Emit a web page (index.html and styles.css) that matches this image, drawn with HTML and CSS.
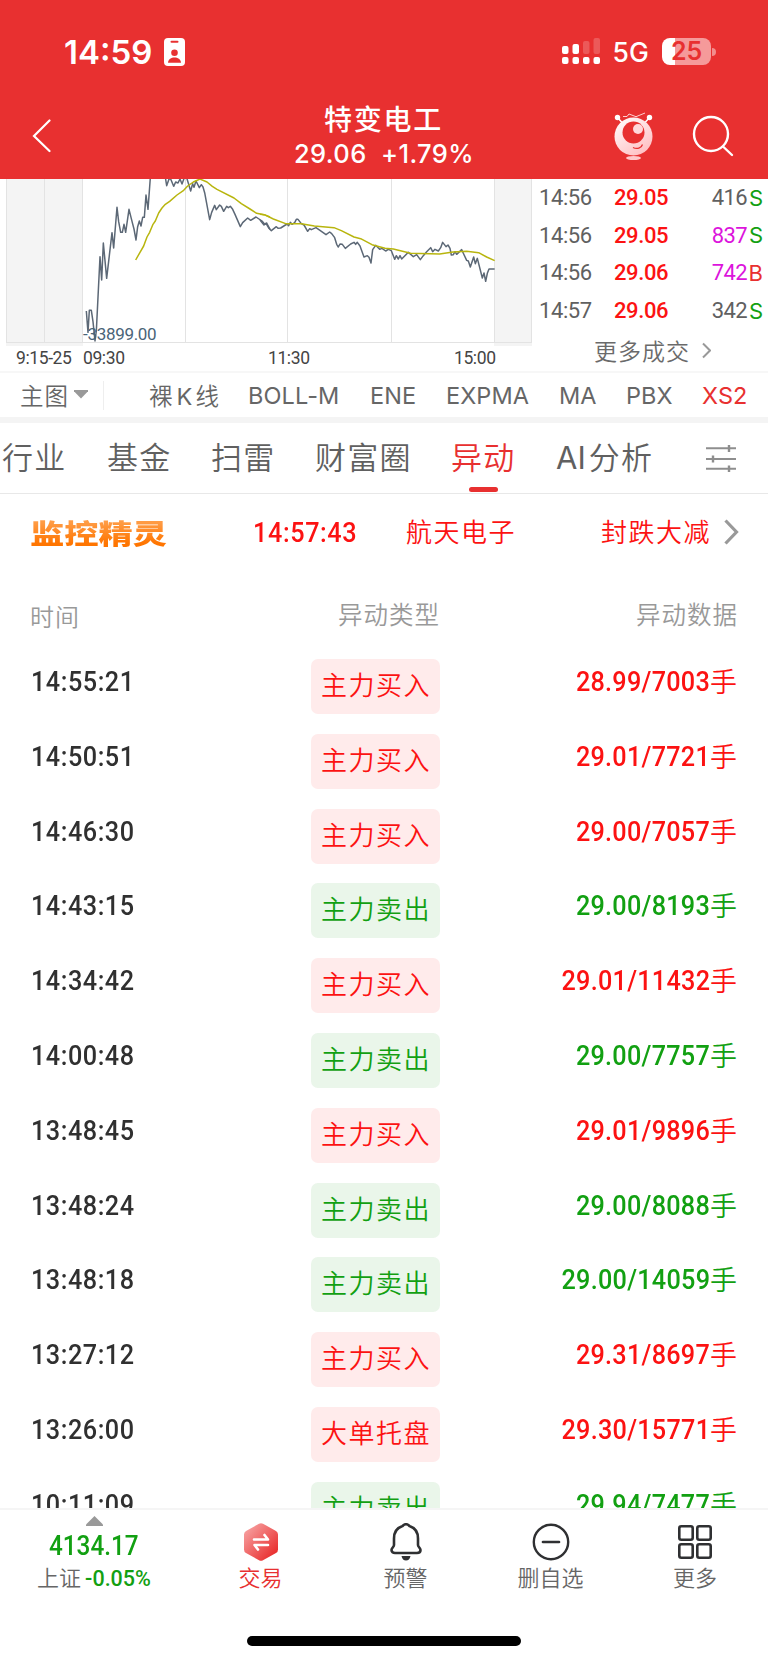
FILE: index.html
```html
<!DOCTYPE html>
<html lang="zh-CN">
<head>
<meta charset="utf-8">
<meta name="viewport" content="width=device-width">
<title>特变电工</title>
<link rel="stylesheet" href="styles.css">
</head>
<body>
<div class="phone">
  <header class="top">
    <div class="status">
      <span class="clock">14:59</span>
      <svg class="idcard" width="21" height="28" viewBox="0 0 21 28"><rect width="21" height="28" rx="4" fill="#fff"/><rect x="6.5" y="2.7" width="8" height="2" rx="1" fill="#e83030"/><circle cx="10.5" cy="14.7" r="3.3" fill="#e83030"/><path d="M4 24.8c.3-7 12.700-7 13 0z" fill="#e83030"/></svg>
      <svg class="signal" width="39" height="28" viewBox="0 0 39 28" fill="#fff"><rect x="0" y="8" width="6.500" height="8" rx="2"/><rect x="10.500" y="6" width="6.500" height="10" rx="2"/><rect x="21" y="3" width="6.500" height="13" rx="2" opacity=".2"/><rect x="31.500" y="0" width="6.500" height="16" rx="2" opacity=".2"/><rect x="0" y="19" width="6.500" height="7" rx="2"/><rect x="10.500" y="19" width="6.500" height="7" rx="2"/><rect x="21" y="19" width="6.500" height="7" rx="2"/><rect x="31.500" y="19" width="6.500" height="7" rx="2"/></svg>
      <span class="net">5G</span>
      <span class="battery">25</span><span class="nub"></span>
    </div>
    <div class="titlebar">
      <svg class="back" width="20" height="34" viewBox="0 0 20 34"><path d="M17.500 1.500 2 17l15.500 15" fill="none" stroke="#fff" stroke-width="2.200" stroke-linecap="round"/></svg>
      <div class="title"><h1>特变电工</h1><p>29.06&nbsp; +1.79%</p></div>
      <svg class="robot" width="40" height="50" viewBox="0 0 40 50">
        <defs><linearGradient id="face" x1="0" y1="0" x2=".7" y2="1"><stop stop-color="#fff"/><stop offset="1" stop-color="#ffc0c3"/></linearGradient></defs>
        <path d="M3.500 5.500 8 10.500M35.500 5.500 31 10.500" stroke="#fff" stroke-width="1.500"/><circle cx="3.500" cy="5.500" r="2.700" fill="#fff"/><circle cx="35.500" cy="5.500" r="2.700" fill="#fff"/>
        <path d="M9 4.500h4l2-2.500 7 2.700 9-3.700" fill="none" stroke="#ffd0d0" stroke-width="1"/>
        <circle cx="19.500" cy="24.500" r="19" fill="url(#face)"/><circle cx="19.500" cy="20.500" r="11" fill="#e83030"/><circle cx="24" cy="17" r="5" fill="#ffd8da"/>
        <path d="M19 35.500c4 2 8.500.5 9.500-3" fill="none" stroke="#e83030" stroke-width="1.300"/><ellipse cx="19.500" cy="46" rx="7.500" ry="2" fill="#ffc8ca"/>
      </svg>
      <svg class="search" width="42" height="42" viewBox="0 0 42 42"><g fill="none" stroke="#fff" stroke-width="2.400" stroke-linecap="round"><circle cx="19" cy="19" r="17"/><path d="m31 31.500 9 8.500"/></g></svg>
    </div>
  </header>

  <section class="market">
    <div class="chart">
      <svg width="534" height="168" viewBox="0 0 534 168">
        <rect x="6" width="77" height="167" fill="#f4f4f4"/><rect x="494" width="38" height="167" fill="#f4f4f4"/>
        <path d="M6.500 0v164M44.500 0v164M82.500 0v164M185.500 0v164M287.500 0v164M391.500 0v164M494.500 0v164M531.500 0v164M6 163.500h526" stroke="#e3e3e3" fill="none"/>
        <g fill="none" stroke="#5c6876" stroke-width="4.500" stroke-linejoin="round">
          <path transform="translate(0 -4) scale(.33333)" d="M259 408 264 472 268 406H274L279 440 285 498 289 468 300 245 305 315 310 204 320 310 336 173 341 219 351 97 356 140 362 172H367L372 148 377 172 387 103 397 143 402 162 408 195 413 155 418 138 423 153 428 127H433L438 60 444 103 451 8M495 0 500 32 507 12H512L521 34 527 21 534 24 540 12 546 27 553 8H560L572 48 578 26 582 37 588 18 598 38 604 29 609 36 614 53 629 134 635 112 644 91 649 104 659 90 664 94 671 109 680 94 685 98 691 94 698 103 705 118 721 155 728 143 743 129 752 136 768 126 786 138 794 148 800 144 810 163"/>
          <path transform="translate(260 -4) scale(.33333)" d="M0 135 12 150 18 145 26 159 34 167 49 155 54 160 62 159 81 147 86 152 91 142 96 148 104 143 109 133H114L124 146 132 150 143 169 149 161 154 164 168 158 181 167 198 179 209 171 215 176 224 188 230 208 235 216 240 207 247 208 256 220 272 207 282 202 287 208 292 202 300 213 312 246 322 242 327 247 333 264 338 224 347 211 359 223 366 220 377 228 385 223 394 227 404 253 409 242 415 252 420 242 425 252 445 232 460 245 470 239 481 254 490 242 500 230 512 218 518 230 525 223 535 228 542 218 548 202 558 215 564 210 570 220 574 240 580 239 585 230 590 238 605 224 611 237 620 256 625 258 631 276 641 246 646 266 652 250 667 309 672 294 677 319 682 295 687 282H704"/>
        </g>
        <g fill="none" stroke="#b8b50e" stroke-width="4.500" stroke-linejoin="round">
          <path transform="translate(0 -4) scale(.33333)" d="M407 255 420 232 431 213 441 186 449 172 459 148 466 138 476 114 486 99 496 88 509 79 531 60 551 46 563 33 580 21 600 12 621 21 637 34 651 43 702 69 724 86 750 102 770 115 792 119 810 126"/>
          <path transform="translate(260 -4) scale(.33333)" d="M0 118 13 119 40 132 77 146 124 146 163 153 222 158 244 167 282 186 302 191 336 209 375 220 400 222 452 235 539 237 579 231 620 229 656 233 680 246 704 257"/>
        </g>
      </svg>
      <span class="low num">-33899.00</span>
      <div class="times num"><span class="t1">9:15-25</span><span class="t2">09:30</span><span class="t3">11:30</span><span class="t4">15:00</span></div>
    </div>
    <div class="trades">
      <div class="trade num"><span>14:56</span><b>29.05</b><em>416</em><i class="sell">S</i></div>
      <div class="trade num"><span>14:56</span><b>29.05</b><em class="big">837</em><i class="sell">S</i></div>
      <div class="trade num"><span>14:56</span><b>29.06</b><em class="big">742</em><i class="buy">B</i></div>
      <div class="trade num"><span>14:57</span><b>29.06</b><em>342</em><i class="sell">S</i></div>
      <div class="more">更多成交<svg width="9" height="17" viewBox="0 0 9 17"><path d="m1 1.500 7 7-7 7" fill="none" stroke="#999" stroke-width="2"/></svg></div>
    </div>
  </section>

  <nav class="indicators">
    <span class="main-chart">主图</span><i class="caret"></i><i class="rule"></i>
    <span class="i1">裸<u>K</u>线</span><span class="i2">BOLL-M</span><span class="i3">ENE</span><span class="i4">EXPMA</span><span class="i5">MA</span><span class="i6">PBX</span><span class="i7">XS2</span>
  </nav>

  <nav class="tabs">
    <span class="n1">行业</span><span class="n2">基金</span><span class="n3">扫雷</span><span class="n4">财富圈</span><span class="n5 active">异动</span><span class="n6"><u>AI</u>分析</span>
    <svg width="30" height="28" viewBox="0 0 30 28"><path d="M0 4.300h30M0 15h30M0 24.800h30" stroke="#8e8e8e" stroke-width="2"/><path d="M23 1v7M7 11.500v7M23 21.500v7" stroke="#8e8e8e" stroke-width="2.400"/></svg>
  </nav>

  <section class="monitor">
    <strong class="brand">监控精灵</strong>
    <span class="alert-time num">14:57:43</span><span class="alert-name">航天电子</span><span class="alert-type">封跌大减</span>
    <svg width="15" height="26" viewBox="0 0 15 26"><path d="m1.500 1.500 11 11.500-11 11.500" fill="none" stroke="#999" stroke-width="3.200"/></svg>
  </section>

  <main class="moves">
    <div class="head"><span>时间</span><span>异动类型</span><span>异动数据</span></div>
    <div class="row buy"><time class="num">14:55:21</time><mark>主力买入</mark><p><span class="num">28.99/7003</span>手</p></div>
    <div class="row buy"><time class="num">14:50:51</time><mark>主力买入</mark><p><span class="num">29.01/7721</span>手</p></div>
    <div class="row buy"><time class="num">14:46:30</time><mark>主力买入</mark><p><span class="num">29.00/7057</span>手</p></div>
    <div class="row sell"><time class="num">14:43:15</time><mark>主力卖出</mark><p><span class="num">29.00/8193</span>手</p></div>
    <div class="row buy"><time class="num">14:34:42</time><mark>主力买入</mark><p><span class="num">29.01/11432</span>手</p></div>
    <div class="row sell"><time class="num">14:00:48</time><mark>主力卖出</mark><p><span class="num">29.00/7757</span>手</p></div>
    <div class="row buy"><time class="num">13:48:45</time><mark>主力买入</mark><p><span class="num">29.01/9896</span>手</p></div>
    <div class="row sell"><time class="num">13:48:24</time><mark>主力卖出</mark><p><span class="num">29.00/8088</span>手</p></div>
    <div class="row sell"><time class="num">13:48:18</time><mark>主力卖出</mark><p><span class="num">29.00/14059</span>手</p></div>
    <div class="row buy"><time class="num">13:27:12</time><mark>主力买入</mark><p><span class="num">29.31/8697</span>手</p></div>
    <div class="row buy"><time class="num">13:26:00</time><mark>大单托盘</mark><p><span class="num">29.30/15771</span>手</p></div>
    <div class="row sell"><time class="num">10:11:09</time><mark>主力卖出</mark><p><span class="num">29.94/7477</span>手</p></div>
  </main>

  <footer class="bottom">
    <div class="actions">
      <div class="index">
        <svg width="17" height="10" viewBox="0 0 17 10"><path d="M8.500 0 17 8.500V10H0V8.500z" fill="#999"/></svg>
        <strong class="num">4134.17</strong>
        <p>上证<span class="num">-0.05%</span></p>
      </div>
      <div class="action on">
        <svg width="38" height="38" viewBox="0 0 38 38"><defs><linearGradient id="hex" x1="0" y1="0" x2="1" y2="1"><stop stop-color="#f8adad"/><stop offset="1" stop-color="#e71c1c"/></linearGradient></defs><path d="M17 .7q2-1 4 0L34 8q2 1 2 3.500v15q0 2.500-2 3.500l-13 7.300q-2 1-4 0L4 30q-2-1-2-3.500v-15Q2 9 4 8z" fill="url(#hex)"/><path d="M12 16.500h14l-3.500-4.500M26 22H12.500l3.500 4.500" fill="none" stroke="#fff" stroke-width="2.600" stroke-linecap="round" stroke-linejoin="round"/></svg>
        <span>交易</span>
      </div>
      <div class="action">
        <svg width="38" height="38" viewBox="0 0 38 38"><path d="M15.500 3q3.500-3.500 7 0C28.500 5 31 9.500 31 15.500V22c0 2 2.500 3 2.500 5 0 2-1.500 3-3.500 3H8c-2 0-3.500-1-3.500-3 0-2 2.500-3 2.500-5v-6.500C7 9.500 9.500 5 15.500 3z" fill="none" stroke="#2f3032" stroke-width="2.600" stroke-linejoin="round"/><path d="M14.500 33h9q-1 4.500-4.500 4.500T14.500 33z" fill="#2f3032"/></svg>
        <span>预警</span>
      </div>
      <div class="action">
        <svg width="38" height="38" viewBox="0 0 38 38" fill="none" stroke="#2f3032" stroke-width="2.400"><circle cx="19" cy="19" r="17.200"/><path d="M11 19h16" stroke-linecap="round" stroke-width="2.700"/></svg>
        <span>删自选</span>
      </div>
      <div class="action">
        <svg width="38" height="38" viewBox="0 0 38 38" fill="none" stroke="#2f3032" stroke-width="2.600"><rect x="3.300" y="3.300" width="13.400" height="13.400" rx="2"/><rect x="21.300" y="3.300" width="13.400" height="13.400" rx="2"/><rect x="3.300" y="21.300" width="13.400" height="13.400" rx="2"/><rect x="21.300" y="21.300" width="13.400" height="13.400" rx="2"/></svg>
        <span>更多</span>
      </div>
    </div>
    <div class="home"></div>
  </footer>
</div>
</body>
</html>
```

FILE: styles.css
```css
* { box-sizing: border-box; margin: 0; padding: 0; }
body { background: #fff; font-family: "Noto Sans CJK SC DemiLight", "Noto Sans CJK SC", sans-serif; font-weight: 350; }
i, em { font-style: normal; }
u { text-decoration: none; font-family: Inter, sans-serif; font-weight: 400; }
svg { display: block; flex: none; }
span, strong { white-space: nowrap; }
.num { font-family: Roboto, "Noto Sans CJK SC", sans-serif; }
.phone { width: 768px; height: 1663px; display: flex; flex-direction: column; overflow: hidden; }

.top { height: 179px; background: #e83030; color: #fff; flex: none; }
.status { height: 103px; padding: 0 52px 0 64px; display: flex; align-items: center; font-family: Inter, sans-serif; }
.clock { width: 100px; font-size: 33px; font-weight: 600; }
.idcard { margin-right: 377px; }
.signal { margin-right: 12px; }
.net { width: 50px; font-size: 26.500px; font-weight: 500; }
.battery { width: 49px; height: 27px; border-radius: 8px; background: linear-gradient(90deg, #fff 13px, #f59a9a 13px); color: #e83030; font-size: 25px; font-weight: 600; line-height: 27px; text-align: center; }
.nub { width: 4px; height: 8px; margin-left: 1px; border-radius: 0 4px 4px 0; background: #f28d8d; }
.titlebar { height: 76px; padding: 0 34px 0 32px; display: flex; }
.back { margin-top: 16px; }
.title { width: 462px; margin-left: 101px; text-align: center; }
.title h1 { font-family: "Noto Sans CJK SC", sans-serif; font-size: 28px; font-weight: 500; line-height: 34px; letter-spacing: 1.800px; margin-top: -2px; padding-left: 1px; }
.title p { font: 500 25.500px/34px Inter, sans-serif; letter-spacing: .4px; margin-top: 2px; padding-left: 2px; }
.robot { margin: 9px 38px 0 1px; }
.search { margin-top: 12px; }

.market { display: flex; height: 192px; flex: none; }
.chart { width: 534px; position: relative; }
.low { position: absolute; left: 83px; top: 144px; font-size: 17px; line-height: 22px; letter-spacing: -.3px; color: #4a6478; font-weight: 400; }
.times { display: flex; height: 24px; align-items: center; font-size: 17.500px; letter-spacing: -.4px; font-weight: 400; color: #444; padding-bottom: 2px; }
.t1 { width: 67px; margin-left: 16px; }
.t2 { width: 185px; }
.t3 { width: 186px; }
.trades { width: 234px; padding-left: 5px; }
.trade { height: 37.600px; display: flex; align-items: center; font-size: 22px; font-weight: 400; color: #606060; }
.trade span { width: 75px; letter-spacing: -.4px; }
.trade b { width: 60px; font-weight: 500; color: #fc1212; letter-spacing: -.4px; }
.trade em { width: 73px; text-align: right; letter-spacing: -.6px; }
.trade .big { color: #dc14dc; }
.trade i { width: 16px; font: 400 22px Inter, sans-serif; text-align: right; }
.trade .sell { color: #12a012; }
.trade .buy { color: #e83030; }
.more { display: flex; align-items: center; height: 42px; padding-left: 55px; font-size: 23px; letter-spacing: 1px; color: #6a6a6a; }
.more svg { margin-left: 12px; }

.indicators { height: 52px; flex: none; display: flex; align-items: center; border-top: 2px solid #f7f7f7; border-bottom: 6px solid #f4f4f4; font-size: 23.500px; color: #666; }
.indicators span { font-family: Inter, sans-serif; font-weight: 400; letter-spacing: .1px; padding-top: 1px; }
.indicators .main-chart, .indicators .i1 { font-family: "Noto Sans CJK SC DemiLight", "Noto Sans CJK SC", sans-serif; font-weight: 350; padding: 0 0 1px; }
.indicators .main-chart { width: 54px; margin-left: 20px; letter-spacing: 1px; }
.caret { width: 14px; height: 9px; background: #999; clip-path: polygon(0 0, 100% 0, 100% 20%, 50% 100%, 0 20%); margin-bottom: 2px; }
.rule { width: 1px; height: 29px; margin-left: 15px; background: #eee; }
.indicators .i1 { width: 99px; margin-left: 45px; }
.i1 u { padding: 0 3px 0 4px; }
.i2 { width: 122px; }
.i3 { width: 76px; }
.i4 { width: 113px; }
.i5 { width: 67px; }
.i6 { width: 76px; }
.i7 { color: #e83030; }

.tabs { height: 71px; flex: none; display: flex; align-items: center; border-bottom: 1px solid #e8e8e8; font-size: 31px; letter-spacing: 1.200px; color: #606060; padding-left: 2px; }
.tabs span { height: 70px; line-height: 66px; }
.n1 { width: 105px; }
.n2, .n3 { width: 104px; }
.n4 { width: 136px; }
.n5 { width: 105px; }
.n6 { width: 150px; }
.n6 u { letter-spacing: 0; padding-right: 3px; font-size: 31px; }
.tabs .active { color: #e83030; }
.active::after { content: ""; display: block; width: 29px; height: 5px; margin: -2px 0 0 18px; border-radius: 3px; background: #e83030; }

.monitor { height: 76px; flex: none; display: flex; align-items: center; color: #fc1212; font-size: 26px; letter-spacing: 1.500px; }
.brand { font-family: "Noto Sans CJK SC", sans-serif; width: 108px; margin: 2px 115px 0 30px; font-size: 27px; letter-spacing: 0; font-weight: 900; line-height: 36px; transform: scaleX(1.270); transform-origin: left; background: linear-gradient(#ff9c45 20%, #ff7500 80%); background-clip: text; -webkit-background-clip: text; color: transparent; }
.alert-time { width: 153px; font-size: 28px; font-weight: 500; letter-spacing: .7px; transform: scaleX(.9); transform-origin: left; }
.alert-name, .alert-type { padding-bottom: 4px; }
.alert-name { width: 195px; }
.alert-type { width: 123px; }

.moves { height: 938px; flex: none; overflow: hidden; }
.head { height: 88px; display: grid; grid-template-columns: 307px 133px 298px; font-size: 24.500px; letter-spacing: 1px; color: #999; }
.head span { text-align: right; line-height: 87px; }
.head span:first-child { text-align: left; padding-left: 30px; line-height: 91px; font-size: 24px; }
.row { height: 74.800px; padding-top: 1px; display: grid; grid-template-columns: 311px 129px 297px; }
.row time { padding-left: 31px; font-size: 28px; font-weight: 500; line-height: 45px; letter-spacing: .6px; color: #303030; transform: scaleX(.9); transform-origin: 31px 0; }
.row mark { height: 55px; border-radius: 7px; background: #ffebeb; color: #fc1212; font-size: 26px; line-height: 50px; letter-spacing: 1.500px; text-align: center; padding-left: 1px; }
.row.sell mark { background: #eaf6ea; color: #12a012; }
.row p { display: flex; justify-content: flex-end; font-size: 27px; line-height: 43px; color: #fc1212; }
.row.sell p { color: #12a012; }
.row p .num { font-size: 28px; font-weight: 500; line-height: 45px; letter-spacing: .3px; transform: scaleX(.9); transform-origin: right; }

.bottom { height: 155px; flex: none; border-top: 2px solid #f5f5f5; background: #fff; position: relative; }
.actions { display: grid; grid-template-columns: 188px 145px 145px 145px 144px; height: 95px; }
.index { display: flex; flex-direction: column; align-items: center; padding-top: 6px; }
.index strong { font-size: 27px; line-height: 40px; font-weight: 500; letter-spacing: 0; color: #12a012; transform: scaleX(.9); }
.index p { font-size: 22px; line-height: 28px; color: #666; margin-top: -4px; white-space: nowrap; }
.index p .num { margin-left: 4px; font-size: 21.500px; font-weight: 500; color: #12a012; }
.action { display: flex; flex-direction: column; align-items: center; padding-top: 13px; color: #666; font-size: 22px; line-height: 30px; }
.on { color: #e83030; }
.home { width: 274px; height: 10px; margin: 31px auto 0; border-radius: 5px; background: #000; }
```
